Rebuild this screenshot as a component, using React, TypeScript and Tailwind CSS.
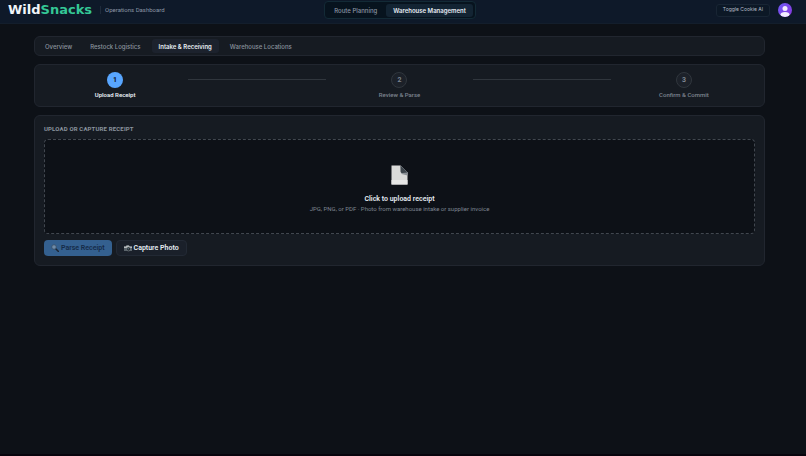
import type { ReactNode } from 'react';

const MODES = ['Route Planning', 'Warehouse Management'];
const TABS = ['Overview', 'Restock Logistics', 'Intake & Receiving', 'Warehouse Locations'];

function Header() {
  return (
    <header className="flex h-6 items-start border-b border-[#131e2c] bg-[#0e1929] pl-2 pr-[14px]">
      <div className="flex h-5 flex-1 items-center">
        <span className="font-['DejaVu_Sans',sans-serif] text-[13px] leading-5 font-bold text-[#f1f5f9]">
          Wild<span className="text-[#34c796]">Snacks</span>
        </span>
        <span className="ml-2 border-l border-[#1f2b3b] pl-1 text-[6px] leading-2 text-[#8b95a5]">
          Operations Dashboard
        </span>
      </div>
      <nav className="mt-px flex h-[18px] items-center gap-[2px] rounded-[4px] border border-[#132a36] bg-[#07131e] px-[2px] font-[Inter,sans-serif]">
        {MODES.map((mode) => (
          <button
            key={mode}
            className={
              mode === 'Warehouse Management'
                ? 'h-[13px] rounded-[3px] bg-[#132433] px-[7px] text-[6px] font-semibold text-[#e6edf3]'
                : 'h-[13px] rounded-[3px] px-[7px] text-[6px] font-medium text-[#8b95a5]'
            }
          >
            {mode}
          </button>
        ))}
      </nav>
      <div className="flex h-5 flex-1 items-center justify-end gap-2">
        <button className="flex h-[13px] items-center rounded-[3px] border border-[#182534] bg-[#0c1826] px-[6px] font-[Inter,sans-serif] text-[5px] text-[#b4bcc8]">
          Toggle Cookie AI
        </button>
        <button aria-label="Account" className="size-[14px]">
          <svg viewBox="0 0 28 28" className="size-full">
            <defs>
              <linearGradient id="avatar" x1="0" y1="0" x2="1" y2="1">
                <stop offset="0" stopColor="#6d5cf5" />
                <stop offset="1" stopColor="#8b35dd" />
              </linearGradient>
              <clipPath id="avatarClip">
                <circle cx="14" cy="14" r="14" />
              </clipPath>
            </defs>
            <circle cx="14" cy="14" r="14" fill="url(#avatar)" />
            <g clipPath="url(#avatarClip)" fill="#f3eefe">
              <circle cx="14" cy="11" r="5" />
              <ellipse cx="14" cy="23" rx="9" ry="5" />
            </g>
          </svg>
        </button>
      </div>
    </header>
  );
}

function Card({ className, children }: { className: string; children: ReactNode }) {
  return <section className={`rounded-md border border-[#21262f] bg-[#161b22] ${className}`}>{children}</section>;
}

function Step({ number, label, active = false }: { number: number; label: string; active?: boolean }) {
  return (
    <li className="flex flex-col items-center gap-[3px]">
      <span
        className={
          active
            ? 'flex size-4 items-center justify-center rounded-full bg-[#58a6ff] text-[7px] font-bold text-[#0d1117]'
            : 'flex size-4 items-center justify-center rounded-full border border-[#30363d] bg-[#1c2129] text-[7px] font-bold text-[#7d8590]'
        }
      >
        {number}
      </span>
      <span className={active ? 'text-[6px] leading-2 font-semibold text-[#e6edf3]' : 'text-[6px] leading-2 font-medium text-[#7d8590]'}>
        {label}
      </span>
    </li>
  );
}

function StepLine() {
  return <li aria-hidden="true" className="mx-[2px] mt-[7px] h-px bg-[#30363d]" />;
}

function PageIcon() {
  return (
    <svg viewBox="0 0 34 40" className="h-5 w-[17px]">
      <path d="M1 1h18l14 14v24H1z" fill="#d9dad9" />
      <path d="M1 30h32v9H1z" fill="#e6e7e6" />
      <path d="M19 1l14 14v6L21 18z" fill="#8b9197" />
      <path d="M19 1l14 14-10 1c-3 0-4-1-4-4z" fill="#3c444b" />
    </svg>
  );
}

function SearchIcon() {
  return (
    <svg viewBox="0 0 16 16" className="size-2">
      <path d="M9 9l6 6" stroke="#1d2633" strokeWidth="3" strokeLinecap="round" />
      <circle cx="6" cy="6" r="4.5" fill="#6f8ca9" stroke="#3b4d62" strokeWidth="1.5" />
    </svg>
  );
}

function CameraIcon() {
  return (
    <svg viewBox="0 0 16 14" className="h-[7px] w-2">
      <path d="M0 3h4l1-2h5l1 2h5v9H0z" fill="#59636a" />
      <path d="M0 3h4l1-2h5l1 2h5v3H0z" fill="#b7bdbf" />
      <circle cx="9" cy="8" r="4" fill="#20272c" stroke="#8c9498" strokeWidth="1" />
      <circle cx="8.5" cy="7.5" r="1.5" fill="#5c7480" />
    </svg>
  );
}

export default function App() {
  return (
    <div className="min-h-screen border-b-2 border-[#07040d] bg-[#0d1117] font-[Roboto,sans-serif]">
      <Header />
      <main className="flex flex-col gap-2 pt-3 pr-[41px] pl-[34px]">
        <Card className="px-[3px] py-[2px]">
          <nav className="flex items-center gap-1 font-[Inter,sans-serif]">
            {TABS.map((tab) => (
              <button
                key={tab}
                className={
                  tab === 'Intake & Receiving'
                    ? 'h-[14px] rounded-[3px] bg-[#1c222d] px-[7px] text-[6px] font-semibold text-[#e6edf3]'
                    : 'h-[14px] rounded-[3px] px-[7px] text-[6px] font-medium text-[#8b949e]'
                }
              >
                {tab}
              </button>
            ))}
          </nav>
        </Card>

        <Card className="px-[9px] py-[7px]">
          <ol className="grid grid-cols-5">
            <Step number={1} label="Upload Receipt" active />
            <StepLine />
            <Step number={2} label="Review & Parse" />
            <StepLine />
            <Step number={3} label="Confirm & Commit" />
          </ol>
        </Card>

        <Card className="px-[9px] py-[9px]">
          <h2 className="text-[6px] leading-2 font-bold tracking-wide text-[#8b949e]">UPLOAD OR CAPTURE RECEIPT</h2>
          <button className="mt-[6px] flex h-[95px] w-full flex-col items-center justify-center rounded-[4px] border border-dashed border-[#41474f] bg-[#0d1117] pt-1">
            <PageIcon />
            <span className="mt-2 text-[7px] leading-3 font-semibold text-[#e6edf3]">Click to upload receipt</span>
            <span className="text-[6px] leading-2 text-[#7d8590]">JPG, PNG, or PDF · Photo from warehouse intake or supplier invoice</span>
          </button>
          <div className="mt-[6px] flex gap-1">
            <button disabled className="flex h-4 items-center gap-[2px] rounded-[4px] bg-[#34608f] px-[7px] text-[7px] font-semibold text-[#152b48]">
              <SearchIcon />
              Parse Receipt
            </button>
            <button className="flex h-4 items-center gap-[2px] rounded-[4px] border border-[#222934] bg-[#1a202a] px-[7px] text-[7px] font-semibold text-[#e6edf3]">
              <CameraIcon />
              Capture Photo
            </button>
          </div>
        </Card>
      </main>
    </div>
  );
}
